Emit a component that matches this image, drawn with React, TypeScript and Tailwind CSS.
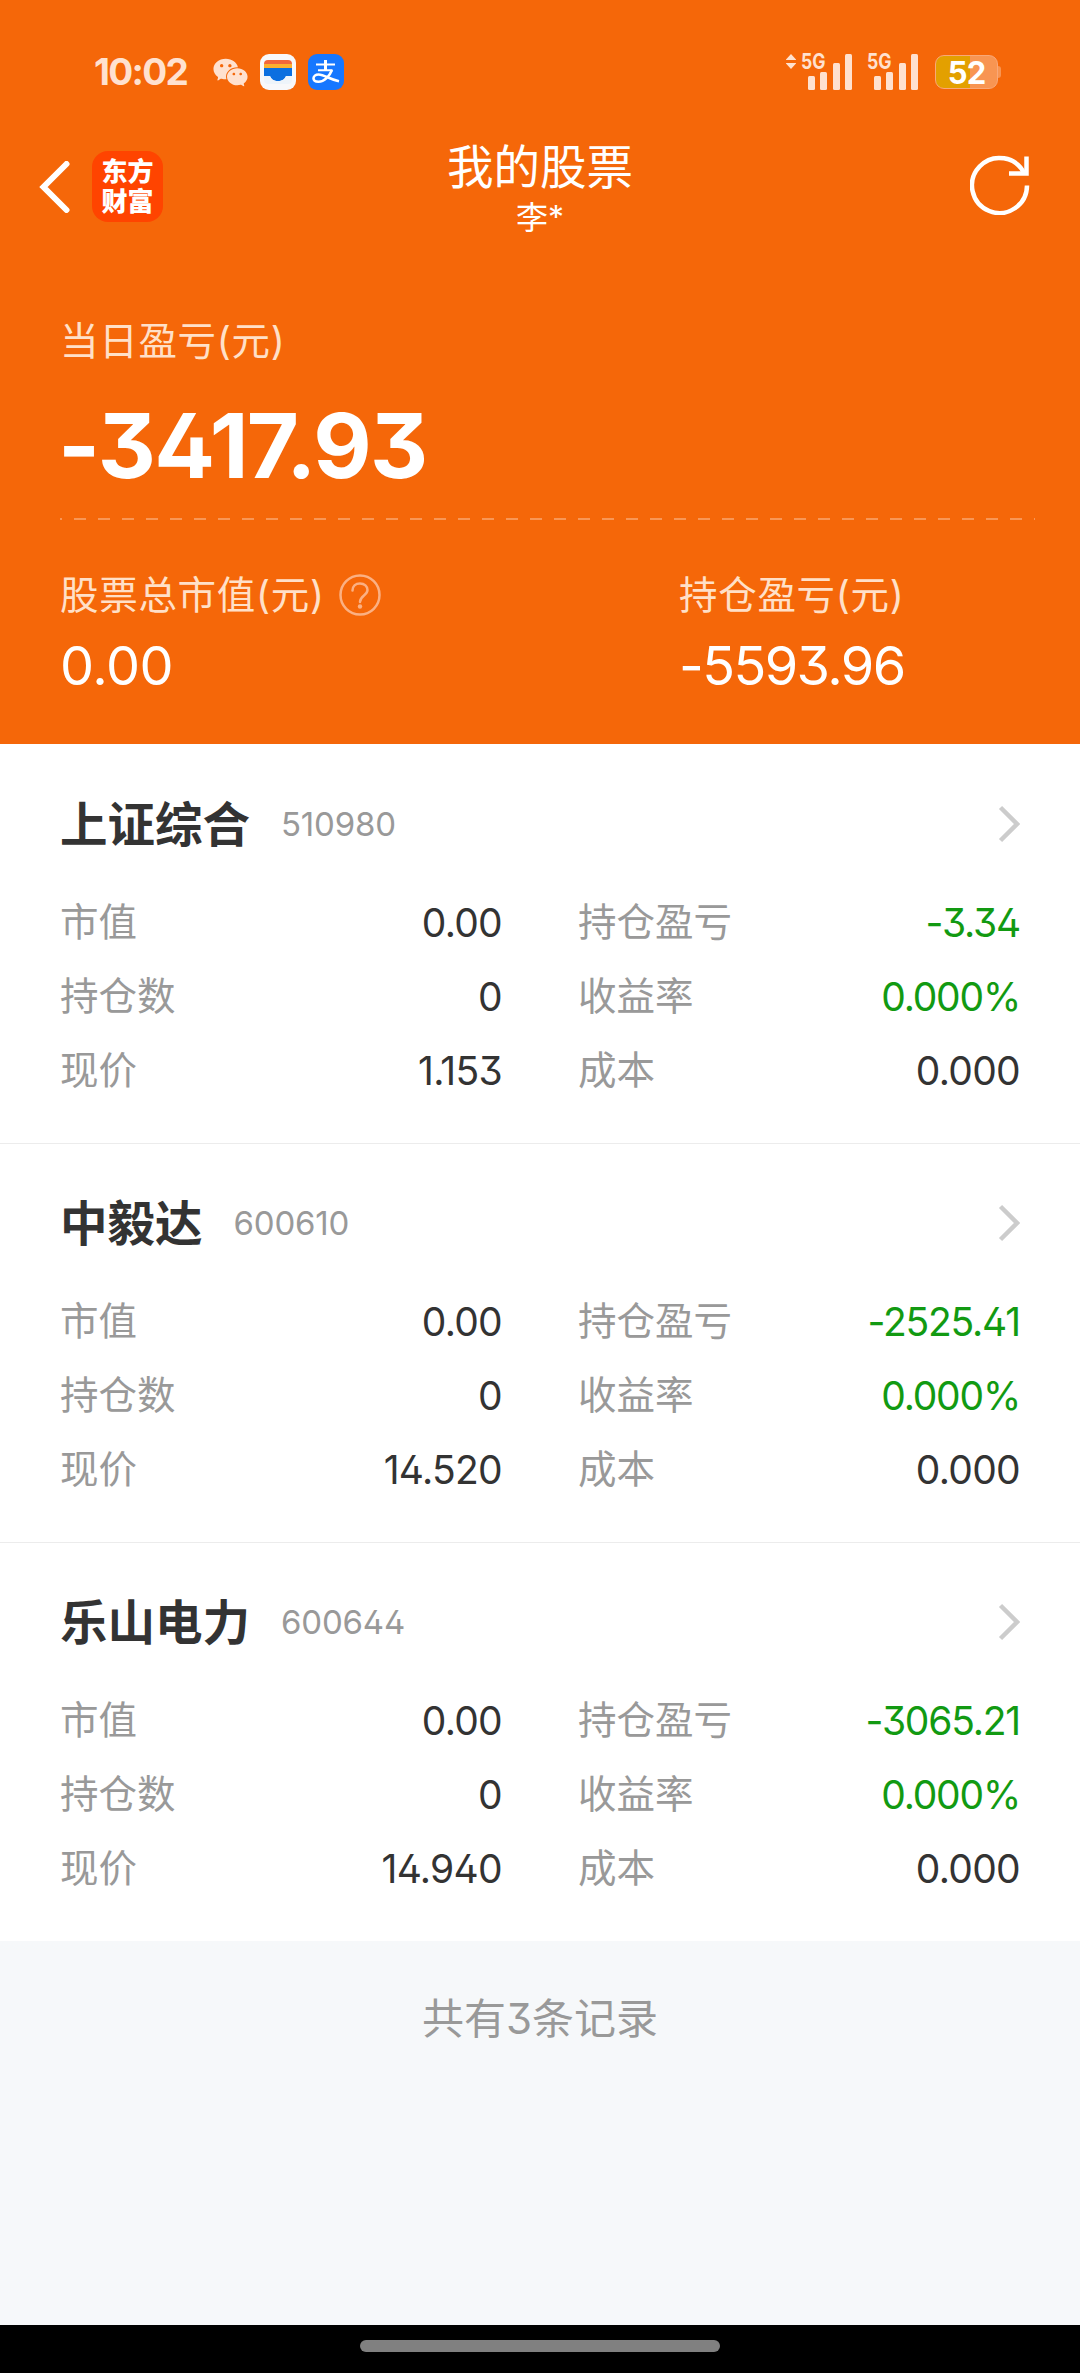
import { AiFillWechat } from 'react-icons/ai';

interface Stock {
  name: string;
  code: string;
  marketValue: string;
  quantity: string;
  price: string;
  profit: string;
  rate: string;
  cost: string;
}

const stocks: Stock[] = [
  { name: '上证综合', code: '510980', marketValue: '0.00', quantity: '0', price: '1.153', profit: '-3.34', rate: '0.000%', cost: '0.000' },
  { name: '中毅达', code: '600610', marketValue: '0.00', quantity: '0', price: '14.520', profit: '-2525.41', rate: '0.000%', cost: '0.000' },
  { name: '乐山电力', code: '600644', marketValue: '0.00', quantity: '0', price: '14.940', profit: '-3065.21', rate: '0.000%', cost: '0.000' },
];

function WalletIcon() {
  return (
    <svg className="h-9 w-9" viewBox="0 0 36 36">
      <rect width="36" height="36" rx="9" fill="#f8f8fa" />
      <path d="M4 10a4 4 0 0 1 4-4h20a4 4 0 0 1 4 4v2H4z" fill="#f2673a" />
      <rect x="4" y="10" width="28" height="5" fill="#fbb030" />
      <path d="M4 14h28v8h-6c-1 3-4 5-8 5s-7-2-8-5H4z" fill="#0b6fe0" />
      <path d="M4 22h6c1 3 4 5 8 5s7-2 8-5h6v4a4 4 0 0 1-4 4H8a4 4 0 0 1-4-4z" fill="#eef4fa" />
    </svg>
  );
}

function AlipayIcon() {
  return (
    <svg className="h-9 w-9" viewBox="0 0 36 36" fill="none" stroke="#fff">
      <rect width="36" height="36" rx="9" fill="#1677ff" stroke="none" />
      <path d="M8 10.5h19M10 16.2h14.5" strokeWidth="2" />
      <path d="M17.5 6v10" strokeWidth="3" />
      <path
        d="M24 16c-2.500 6-7.500 11.800-13.500 11.800-3.500 0-5-1.600-5-3.500s2-3.800 5-3.800c6 0 11 5 20.500 6.800"
        strokeWidth="2.600"
      />
    </svg>
  );
}

function Signal() {
  return (
    <div className="relative h-9 w-[51px]">
      <span className="absolute -top-[4px] left-0 origin-left scale-x-[0.82] text-[21.500px] leading-[22px] font-bold">5G</span>
      <div className="flex h-full items-end justify-end gap-[5.500px]">
        <i className="h-[14px] w-[7px] rounded-[1.500px] bg-[#ffe1cf]" />
        <i className="h-[18px] w-[7px] rounded-[1.500px] bg-[#ffe1cf]" />
        <i className="h-[27px] w-[7px] rounded-[1.500px] bg-[#ffe1cf]" />
        <i className="h-9 w-[7px] rounded-[1.500px] bg-[#ffe1cf]" />
      </div>
    </div>
  );
}

function StatusBar() {
  return (
    <div className="flex h-9 items-center justify-between pr-[79px] pl-[94px] text-[#ffe1cf]">
      <div className="flex items-center">
        <span className="w-[117px] text-[37px] leading-9 font-bold tracking-[-1.700px]">10:02</span>
        <AiFillWechat className="mr-[10px] h-[39px] w-[39px]" />
        <WalletIcon />
        <div className="w-3" />
        <AlipayIcon />
      </div>
      <div className="flex items-center">
        <svg className="mr-[5px] mb-[21px] h-[15px] w-[10px]" viewBox="0 0 10 15" fill="currentColor">
          <path d="M5 0l5 5.500v.5H0v-.5zM0 9h10v.5L5 15 0 9.500z" />
        </svg>
        <Signal />
        <div className="w-[15px]" />
        <Signal />
        <div className="ml-[17px] flex items-center">
          <div className="flex h-[34px] w-[63px] items-center justify-center rounded-[9px] border border-[#f9a878] bg-linear-to-r from-[#e3a000] from-55% to-[#f89552] to-55%">
            <span className="pt-[2px] text-[31px] leading-8 font-bold tracking-[-1px] text-white">52</span>
          </div>
          <div className="h-3 w-[3px] rounded-r-sm bg-[#f89552]" />
        </div>
      </div>
    </div>
  );
}

function NavBar() {
  return (
    <div className="mt-[47px] grid h-[110px] grid-cols-3 text-white">
      <div className="flex items-start pt-[14px] pl-[39px]">
        <svg className="mt-[10px] mr-[22px] h-[52px] w-[31px]" viewBox="0 0 31 52" fill="none">
          <path d="M27.500 3L4.500 26l23 23" stroke="#fff" strokeWidth="6" strokeLinecap="round" />
        </svg>
        <div className="flex h-[71px] w-[71px] flex-col items-center justify-center rounded-2xl bg-[#ff4400] text-[26px] leading-[30px] font-black">
          <span>东方</span>
          <span>财富</span>
        </div>
      </div>
      <div className="text-center">
        <h1 className="mt-[1px] text-[46.500px] leading-[58px]">我的股票</h1>
        <p className="mt-[2px] text-[32px] leading-10">李*</p>
      </div>
      <div className="flex items-start justify-end pt-[17px] pr-[50px]">
        <svg className="h-[61px] w-[60px]" viewBox="0 0 60 61" fill="none" stroke="#fff" strokeWidth="4.500">
          <path d="M57 31.500A27.500 27.500 0 1 1 54.500 20" />
          <path d="M56.500 2.500V19.500H39" />
        </svg>
      </div>
    </div>
  );
}

function Summary() {
  return (
    <div className="mt-[69px] px-[60px] text-white">
      <p className="text-[38.500px] leading-[50px] tracking-[0.700px] text-[#ffe0c8]">当日盈亏(元)</p>
      <p className="mt-[30px] -ml-[2px] text-[90px] leading-[100px] font-bold tracking-[-1.800px]">-3417.93</p>
      <svg className="mt-[22px] h-[2px] w-[975px]" viewBox="0 0 975 2">
        <path d="M0 1h975" stroke="#f99655" strokeWidth="2" strokeDasharray="12 12" strokeDashoffset="10" />
      </svg>
      <div className="mt-[50px] flex">
        <div className="w-[619px]">
          <div className="flex items-center">
            <span className="text-[38.500px] leading-[50px] tracking-[0.700px] text-[#ffe0c8]">股票总市值(元)</span>
            <svg className="ml-[14px] h-[42px] w-[42px]" viewBox="0 0 42 42" fill="none" stroke="#fbb083" strokeWidth="2.500">
              <circle cx="21" cy="21" r="19.500" />
              <path d="M13.500 16.500c0-4 3-7 7.500-7s7.500 3 7.500 6.500c0 5.500-7.500 5.500-7.500 12" strokeLinecap="round" />
              <circle cx="21" cy="32.500" r="2.200" fill="#fbb083" stroke="none" />
            </svg>
          </div>
          <p className="mt-[16px] text-[54px] leading-[60px] tracking-[-0.500px]">0.00</p>
        </div>
        <div>
          <p className="text-[38.500px] leading-[50px] tracking-[0.700px] text-[#ffe0c8]">持仓盈亏(元)</p>
          <p className="mt-[16px] text-[54px] leading-[60px] tracking-[-1.600px]">-5593.96</p>
        </div>
      </div>
    </div>
  );
}

function Field({ label, value, green }: { label: string; value: string; green?: boolean }) {
  return (
    <div className="flex h-[74px] items-center justify-between">
      <span className="text-[38.500px] text-[#999]">{label}</span>
      <span className={`text-[39px] ${green ? 'tracking-[-1.200px] text-[#129a12]' : 'tracking-[-0.700px] text-[#333]'}`}>{value}</span>
    </div>
  );
}

function StockCard({ stock }: { stock: Stock }) {
  return (
    <div className="h-[399px] border-t border-[#ececec] bg-white px-[60px] pt-[50px] first:border-white">
      <div className="flex h-[60px] items-center">
        <h2 className="text-[47.500px] leading-[60px] font-bold text-[#333]">{stock.name}</h2>
        <span className="ml-[31px] text-[33px] tracking-[-0.200px] text-[#999]">{stock.code}</span>
        <svg className="mb-[3px] ml-auto h-[38px] w-[22px]" viewBox="0 0 22 38" fill="none">
          <path d="M2.500 2.500L19 19 2.500 35.500" stroke="#ccc" strokeWidth="4.500" />
        </svg>
      </div>
      <div className="mt-[31px] grid grid-cols-2 gap-x-[76px]">
        <Field label="市值" value={stock.marketValue} />
        <Field label="持仓盈亏" value={stock.profit} green />
        <Field label="持仓数" value={stock.quantity} />
        <Field label="收益率" value={stock.rate} green />
        <Field label="现价" value={stock.price} />
        <Field label="成本" value={stock.cost} />
      </div>
    </div>
  );
}

export default function App() {
  return (
    <div className="flex h-[2373px] w-[1080px] flex-col overflow-hidden bg-[#f6f8fa] font-['Inter','Noto_Sans_CJK_SC',sans-serif] [font-feature-settings:'cv09','cv02']">
      <header className="h-[744px] bg-[#f56709] pt-[54px]">
        <StatusBar />
        <NavBar />
        <Summary />
      </header>
      <main>
        {stocks.map((stock) => (
          <StockCard key={stock.code} stock={stock} />
        ))}
      </main>
      <p className="mt-[48px] text-center text-[42px] leading-[60px] text-[#999]">共有3条记录</p>
      <div className="mt-auto flex h-12 justify-center bg-black pt-[15px]">
        <div className="h-3 w-[360px] rounded-full bg-[#808080]" />
      </div>
    </div>
  );
}
